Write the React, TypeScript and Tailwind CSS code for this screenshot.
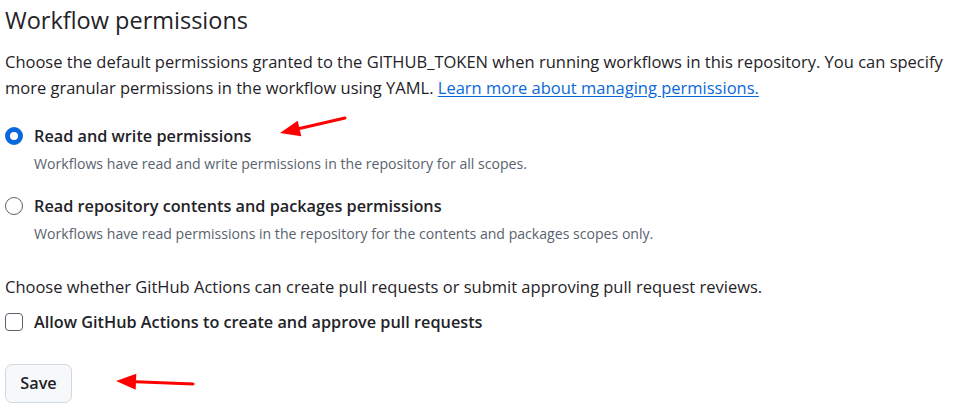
import React from 'react';

const Arrow = ({ x1, y1, x2, y2 }: { x1: number; y1: number; x2: number; y2: number }) => {
	const ang = Math.atan2(y2 - y1, x2 - x1);
	const len = 20;
	const w = 8;
	const bx = x2 - Math.cos(ang) * len;
	const by = y2 - Math.sin(ang) * len;
	const px = -Math.sin(ang) * w;
	const py = Math.cos(ang) * w;
	return (
		<g>
			<line x1={x1} y1={y1} x2={bx} y2={by} stroke="#f00" strokeWidth={3} strokeLinecap="round" />
			<polygon points={`${x2},${y2} ${bx + px},${by + py} ${bx - px},${by - py}`} fill="#f00" />
		</g>
	);
};

const App = () => {
	return (
		<div
			className="relative w-[967px] h-[406px] bg-white text-[#1f2328] overflow-hidden"
			style={{ fontFamily: '"Segoe UI", "Open Sans", sans-serif' }}
		>
			<div className="px-[5px]">
				<h2 className="text-[23.5px] leading-[40px] font-normal">Workflow permissions</h2>
				<p className="text-[16.5px] leading-[26px] mt-[9px] max-w-[955px]">
					Choose the default permissions granted to the GITHUB_TOKEN when running workflows in this repository. You can specify
					more granular permissions in the workflow using YAML.{' '}
					<a href="#" className="text-[#0969da] underline underline-offset-2">
						Learn more about managing permissions.
					</a>
				</p>

				<div className="mt-[21px] space-y-[14px]">
					<label className="flex gap-[11px]">
						<span className="mt-[5px] w-[18px] h-[18px] rounded-full border-[5px] border-[#0969da] bg-white shrink-0" />
						<span>
							<span className="block text-[16.25px] leading-[28px] font-semibold">Read and write permissions</span>
							<span className="block text-[14.1px] leading-[28px] text-[#59636e]">
								Workflows have read and write permissions in the repository for all scopes.
							</span>
						</span>
					</label>
					<label className="flex gap-[11px]">
						<span className="mt-[5px] w-[18px] h-[18px] rounded-full border border-[#59636e] bg-white shrink-0" />
						<span>
							<span className="block text-[16.25px] leading-[28px] font-semibold">
								Read repository contents and packages permissions
							</span>
							<span className="block text-[14.1px] leading-[28px] text-[#59636e]">
								Workflows have read permissions in the repository for the contents and packages scopes only.
							</span>
						</span>
					</label>
				</div>

				<p className="text-[16.5px] leading-[26px] mt-[26px]">
					Choose whether GitHub Actions can create pull requests or submit approving pull request reviews.
				</p>
				<label className="flex items-center gap-[11px] mt-[8px]">
					<span className="w-[18px] h-[18px] rounded-[4px] border border-[#59636e] bg-white shrink-0" />
					<span className="text-[16.25px] leading-[28px] font-semibold">Allow GitHub Actions to create and approve pull requests</span>
				</label>

				<button className="mt-[28px] h-[39px] w-[67px] rounded-[7px] border border-[#d1d9e0] bg-[#f6f8fa] text-[16.25px] font-semibold">
					Save
				</button>
			</div>

			<svg className="absolute inset-0 pointer-events-none" width={967} height={406}>
				<Arrow x1={345} y1={118} x2={280} y2={133} />
				<Arrow x1={193} y1={384} x2={116} y2={381} />
			</svg>
		</div>
	);
};

export default App;
